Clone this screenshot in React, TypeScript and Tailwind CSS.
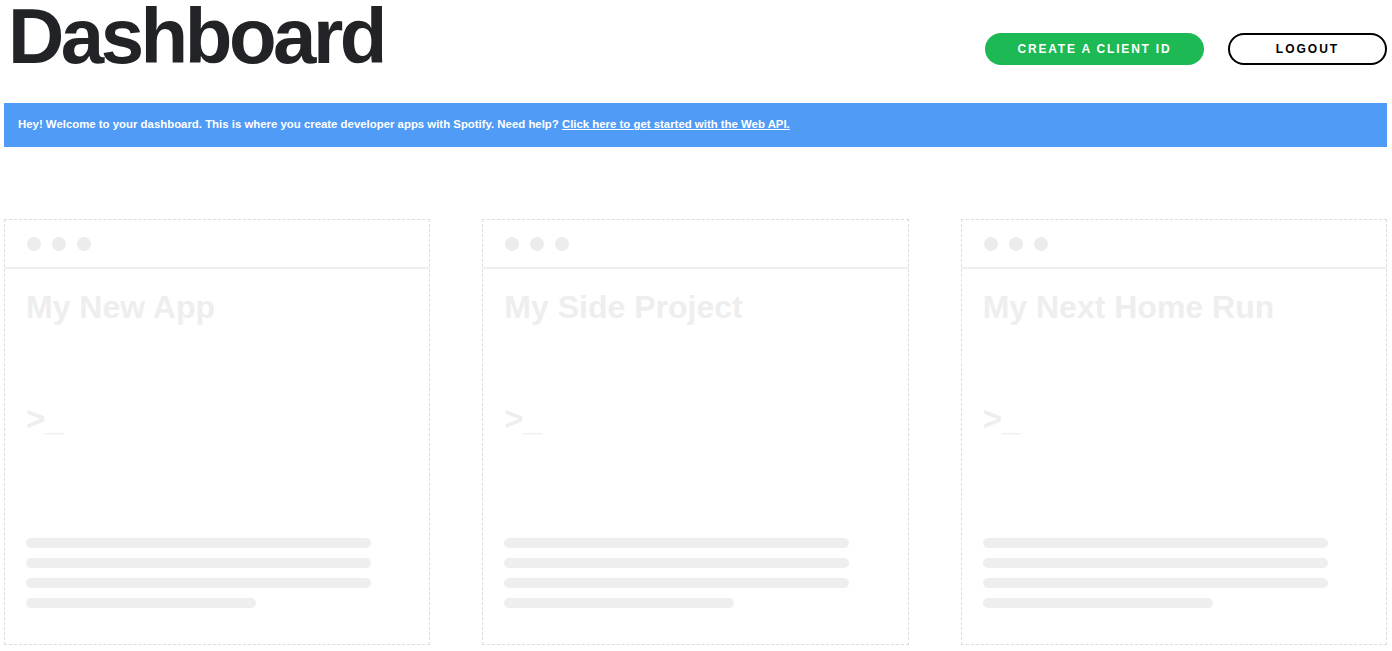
import React from 'react';

type AppCard = {
    title: string;
};

const cards: AppCard[] = [
    { title: 'My New App' },
    { title: 'My Side Project' },
    { title: 'My Next Home Run' },
];

const PlaceholderCard: React.FC<{ card: AppCard }> = ({ card }) => {
    return (
        <div className="border border-dashed border-[#dcdcdc] bg-white">
            <div className="flex items-center gap-[11px] h-[49px] pl-[22px] border-b-2 border-[#eeeeee]">
                <span className="w-[14px] h-[14px] rounded-full bg-[#ececec]" />
                <span className="w-[14px] h-[14px] rounded-full bg-[#ececec]" />
                <span className="w-[14px] h-[14px] rounded-full bg-[#ececec]" />
            </div>
            <div className="pl-[21px] pt-[18px] pb-[36px]">
                <h2 className="text-[32px] leading-[40px] font-bold text-[#eeeeee]">
                    {card.title}
                </h2>
                <div className="mt-[72px] text-[33px] leading-[40px] font-bold text-[#eeeeee]">
                    &gt;_
                </div>
                <div className="mt-[99px] flex flex-col gap-[10px]">
                    <div className="h-[10px] w-[345px] rounded-full bg-[#eeeeee]" />
                    <div className="h-[10px] w-[345px] rounded-full bg-[#eeeeee]" />
                    <div className="h-[10px] w-[345px] rounded-full bg-[#eeeeee]" />
                    <div className="h-[10px] w-[230px] rounded-full bg-[#eeeeee]" />
                </div>
            </div>
        </div>
    );
};

const App: React.FC = () => {
    return (
        <div className="min-h-screen bg-white font-['Liberation_Sans',Arial,sans-serif] pl-1 pr-[5px]">
            <header className="flex justify-between items-start h-[103px]">
                <h1 className="ml-[4px] text-[78px] leading-[72px] font-bold tracking-[-3.5px] text-[#222326]">
                    Dashboard
                </h1>
                <div className="mt-[33px] flex gap-6">
                    <button className="h-[32px] w-[219px] rounded-full bg-[#1db954] text-white text-[12px] font-bold tracking-[1.8px]">
                        CREATE A CLIENT ID
                    </button>
                    <button className="h-[32px] w-[159px] rounded-full border-2 border-black text-black text-[12px] font-bold tracking-[2px]">
                        LOGOUT
                    </button>
                </div>
            </header>

            <div className="h-[44px] flex items-center pl-[14px] bg-[#509bf5] text-white text-[11.4px] font-bold">
                <p>
                    Hey! Welcome to your dashboard. This is where you create developer apps with Spotify. Need help?{' '}
                    <a href="#" className="underline">Click here to get started with the Web API.</a>
                </p>
            </div>

            <div className="mt-[72px] grid grid-cols-3 gap-[52px]">
                {cards.map((card) => (
                    <PlaceholderCard key={card.title} card={card} />
                ))}
            </div>
        </div>
    );
};

export default App;
